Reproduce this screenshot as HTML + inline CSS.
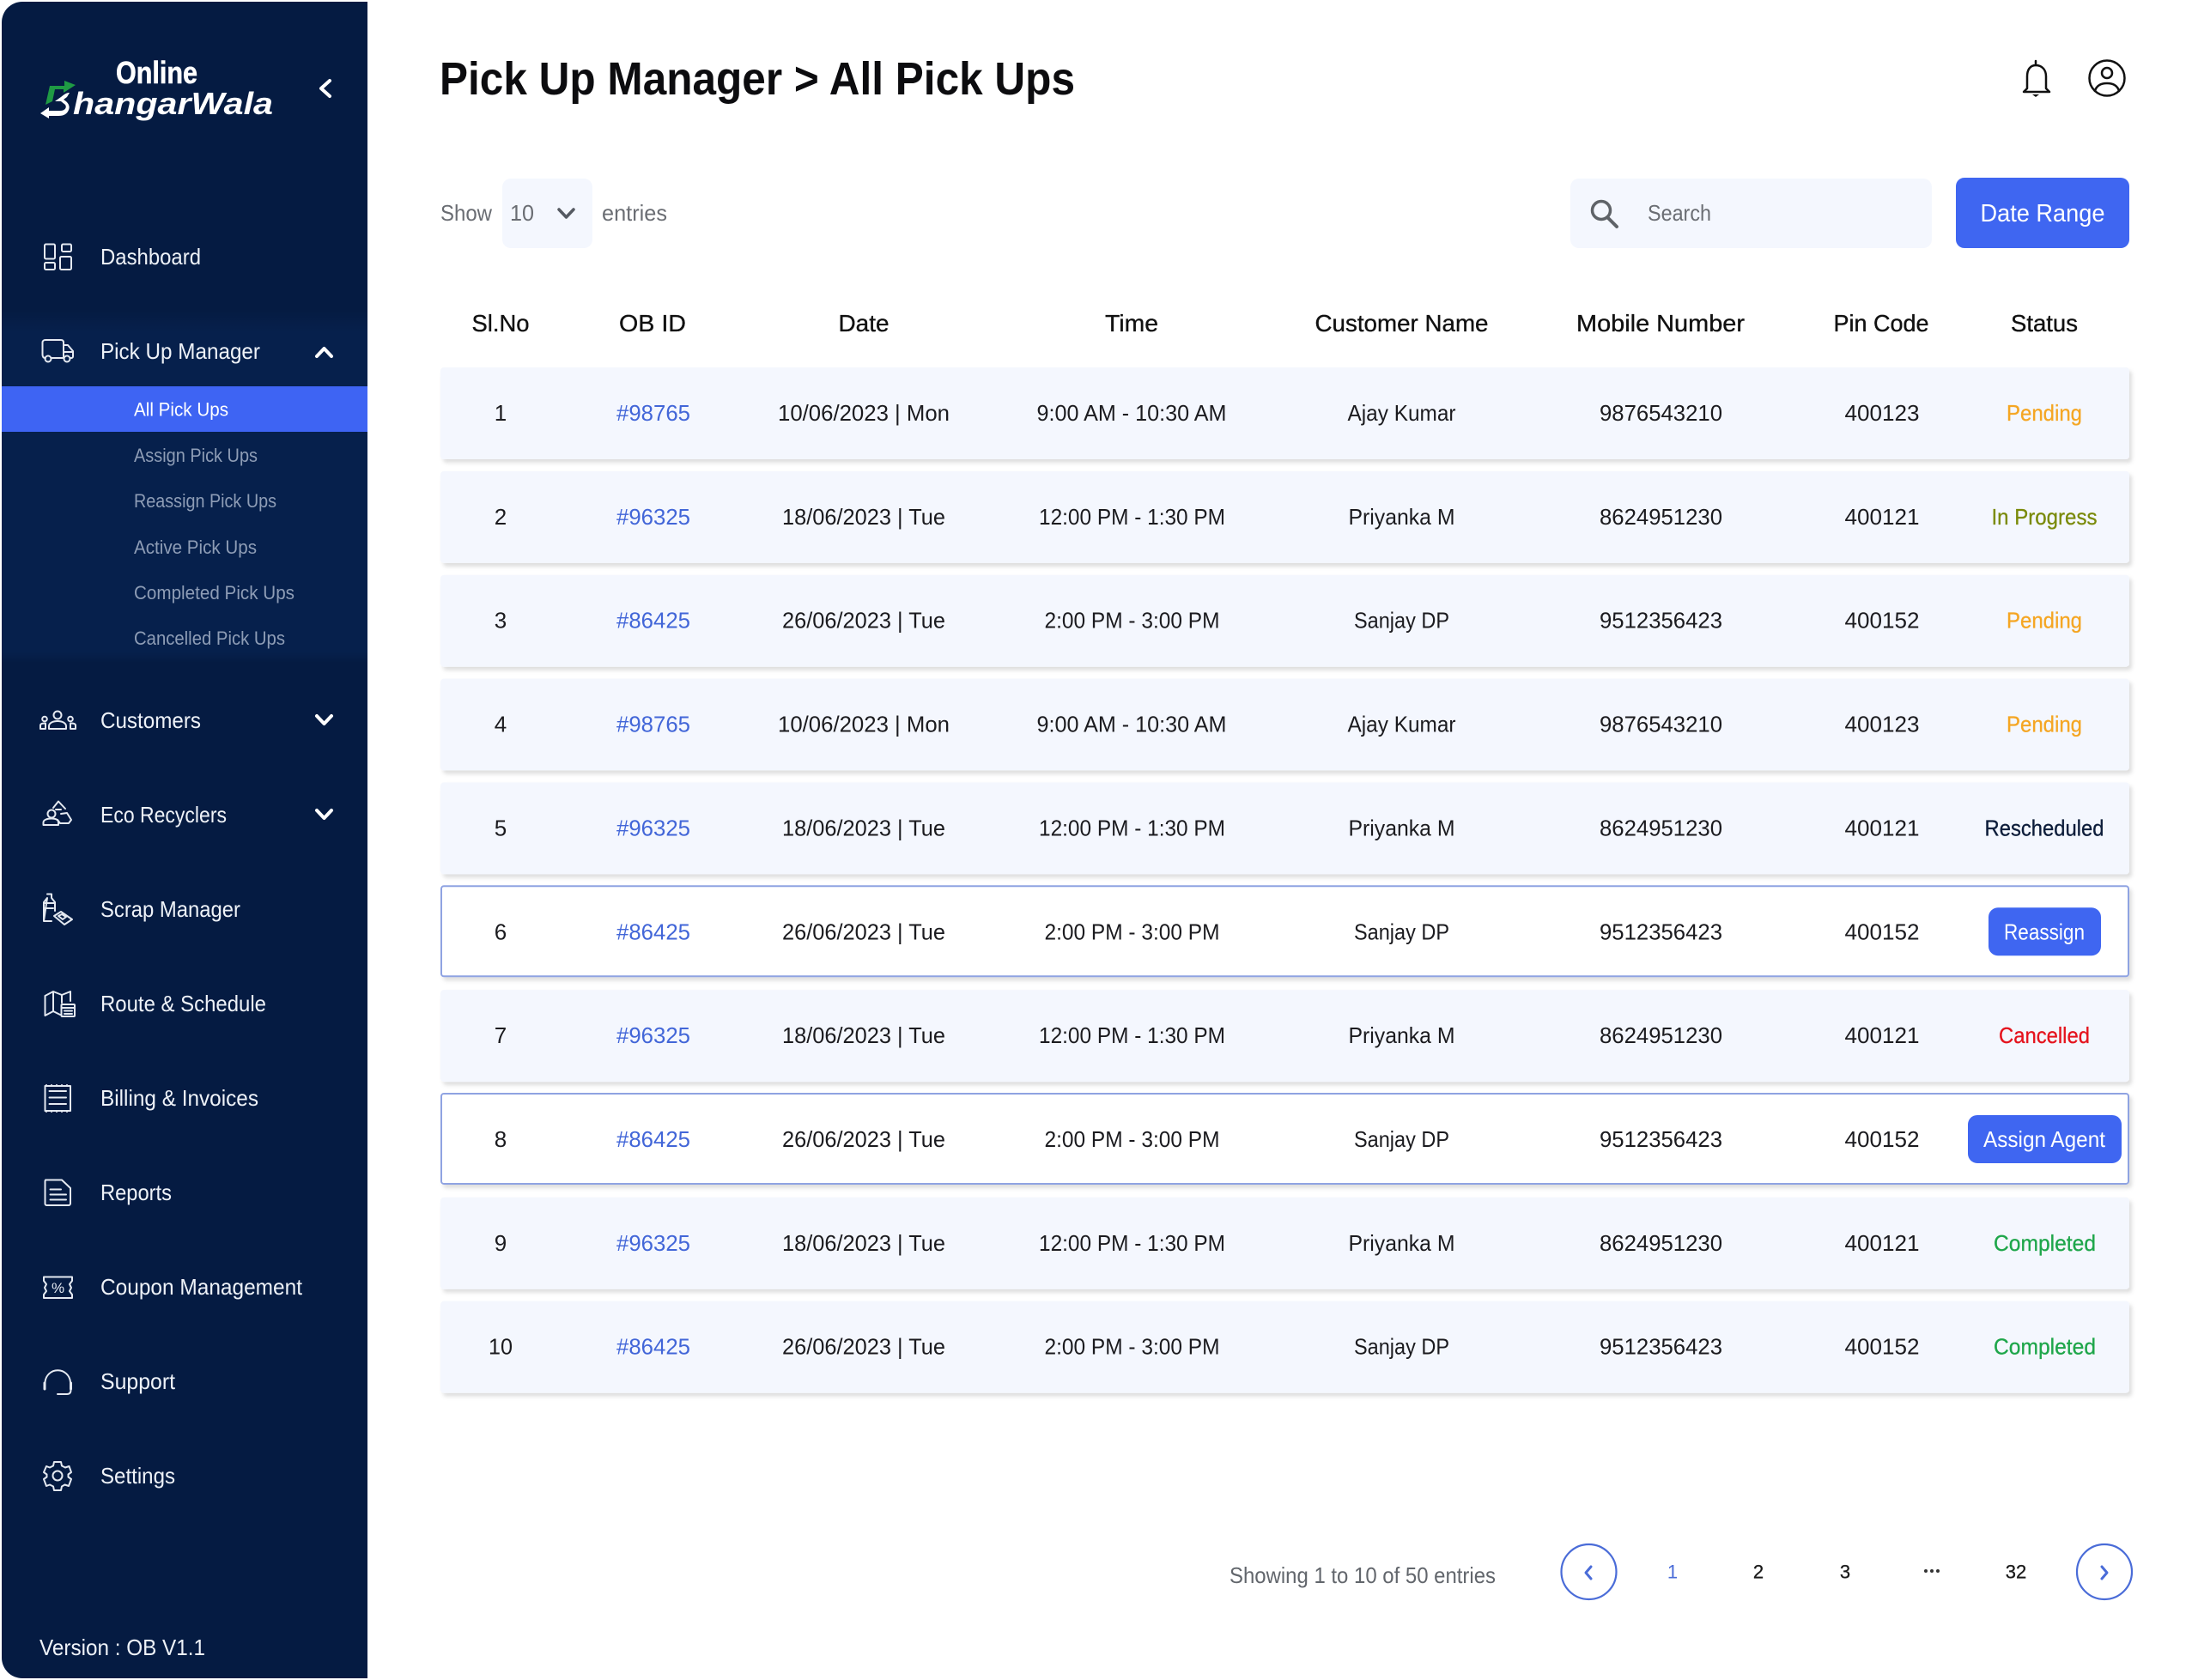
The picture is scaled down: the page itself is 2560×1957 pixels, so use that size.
<!DOCTYPE html>
<html lang="en"><head><meta charset="utf-8"><title>Pick Up Manager</title>
<style>
html,body{margin:0;padding:0;background:#fff;width:2560px;height:1957px;overflow:hidden}
svg{display:block;font-family:"Liberation Sans",Arial,sans-serif}
.ic{fill:none;stroke:#e4e9f1;stroke-width:2;stroke-linejoin:round;stroke-linecap:round}
.chev{fill:none;stroke:#fff;stroke-width:4;stroke-linecap:round;stroke-linejoin:round}
.nav text{font-size:26px;fill:#eef2f8}
.sub text{font-size:22px;fill:#8e9db6}
.hd text{font-size:28px;fill:#111;text-anchor:middle;stroke:#111;stroke-width:.35}
.row text{font-size:26px;fill:#1b1b1f;text-anchor:middle}
.row text.id{fill:#4266d8}
.row text.p{fill:#f5a623;stroke:#f5a623;stroke-width:.3}
.row text.g{fill:#7a8a0a;stroke:#7a8a0a;stroke-width:.3}
.row text.d{fill:#0d1d3a;stroke:#0d1d3a;stroke-width:.3}
.row text.r{fill:#e5131d;stroke:#e5131d;stroke-width:.3}
.row text.c{fill:#1ea64a;stroke:#1ea64a;stroke-width:.3}
.row text.b{fill:#fff}
.f{fill:#f4f7fe}
.o{fill:#fff;stroke:#8fa3e2;stroke-width:2}
</style></head><body>
<svg width="2560" height="1957" viewBox="0 0 2560 1957" xmlns="http://www.w3.org/2000/svg">
<defs>
<filter id="s" x="-2%" y="-20%" width="104%" height="140%"><feDropShadow dx="3" dy="4" stdDeviation="2.5" flood-color="#000" flood-opacity=".13"/></filter>
<linearGradient id="sg" x1="0" y1="0" x2="0" y2="1"><stop offset="0" stop-color="#051b42"/><stop offset=".06" stop-color="#06204c"/><stop offset=".97" stop-color="#06204c"/><stop offset="1" stop-color="#051b42"/></linearGradient>
</defs>
<rect width="2560" height="1957" fill="#fff"/>

<!-- sidebar -->
<path d="M26 2H428V1955H26A24 24 0 0 1 2 1931V26A24 24 0 0 1 26 2Z" fill="#051b42"/>
<rect x="2" y="362" width="426" height="410" fill="url(#sg)"/>
<rect x="2" y="450" width="426" height="53" fill="#3e64f3"/>

<!-- logo -->
<text x="135" y="97" font-size="36" font-weight="700" fill="#fff" stroke="#fff" stroke-width=".6" textLength="95" lengthAdjust="spacingAndGlyphs">Online</text>
<text x="85" y="133" font-size="36" font-weight="700" font-style="italic" fill="#fff" textLength="233" lengthAdjust="spacingAndGlyphs">hangarWala</text>
<path d="M53 122L58 100H75V94L88 99L74 108V104H64L61 118Z" fill="#1f9a44"/>
<path d="M47 132L57 125V129H70C76 129 78 125 76 122L71 118H64L71 113C76 109 78 108 81 108L78 113L74 116C79 119 82 123 80 128C78 133 74 135 68 135H57V138Z" fill="#fff"/>
<path class="chev" d="M384 94L374 103L384 112"/>

<!-- nav -->
<g class="nav">
<text x="117" y="308" textLength="117" lengthAdjust="spacingAndGlyphs">Dashboard</text>
<text x="117" y="418" textLength="186" lengthAdjust="spacingAndGlyphs">Pick Up Manager</text>
<text x="117" y="848" textLength="117" lengthAdjust="spacingAndGlyphs">Customers</text>
<text x="117" y="958" textLength="147" lengthAdjust="spacingAndGlyphs">Eco Recyclers</text>
<text x="117" y="1068" textLength="163" lengthAdjust="spacingAndGlyphs">Scrap Manager</text>
<text x="117" y="1178" textLength="193" lengthAdjust="spacingAndGlyphs">Route &amp; Schedule</text>
<text x="117" y="1288" textLength="184" lengthAdjust="spacingAndGlyphs">Billing &amp; Invoices</text>
<text x="117" y="1398" textLength="83" lengthAdjust="spacingAndGlyphs">Reports</text>
<text x="117" y="1508" textLength="235" lengthAdjust="spacingAndGlyphs">Coupon Management</text>
<text x="117" y="1618" textLength="87" lengthAdjust="spacingAndGlyphs">Support</text>
<text x="117" y="1728" textLength="87" lengthAdjust="spacingAndGlyphs">Settings</text>
<text x="46" y="1928" textLength="193" lengthAdjust="spacingAndGlyphs">Version : OB V1.1</text>
</g>
<g class="sub">
<text x="156" y="484.500" textLength="110" lengthAdjust="spacingAndGlyphs" style="fill:#fff">All Pick Ups</text>
<text x="156" y="538" textLength="144" lengthAdjust="spacingAndGlyphs">Assign Pick Ups</text>
<text x="156" y="591" textLength="166" lengthAdjust="spacingAndGlyphs">Reassign Pick Ups</text>
<text x="156" y="645" textLength="143" lengthAdjust="spacingAndGlyphs">Active Pick Ups</text>
<text x="156" y="698" textLength="187" lengthAdjust="spacingAndGlyphs">Completed Pick Ups</text>
<text x="156" y="751" textLength="176" lengthAdjust="spacingAndGlyphs">Cancelled Pick Ups</text>
</g>
<path class="chev" d="M369 415L377.500 406L386 415"/>
<path class="chev" d="M369 834L377.500 843L386 834"/>
<path class="chev" d="M369 944L377.500 953L386 944"/>

<!-- icons -->
<g class="ic">
<rect x="52" y="284.500" width="12" height="17" rx="1.500"/><rect x="72" y="284.500" width="11" height="8.500" rx="1.500"/><rect x="52" y="306" width="12" height="8" rx="1.500"/><rect x="70" y="299" width="13" height="15" rx="1.500"/>
<path d="M53 417C50 417 49.500 415 49.500 413V399C49.500 397 51 396 53 396H71C73 396 74 397 74 399V417M60 417H73M74 402H79L85 409V415C85 416 84.500 417 83.500 417H82.500"/><circle cx="56" cy="418" r="3.500"/><circle cx="78" cy="418" r="3.500"/><path d="M74 410H85" />
<circle cx="67" cy="833" r="4.500"/><path d="M57 849V846C57 842 62 840 67 840C72 840 77 842 77 846V849Z"/><circle cx="52" cy="837.500" r="2.800"/><path d="M47 849V845C47 843 49 842.500 53 842.500V849Z"/><circle cx="82" cy="837.500" r="2.800"/><path d="M82 842.500C86 842.500 88 843 88 845V849H82Z"/>
<circle cx="60" cy="948" r="4.500"/><path d="M50.500 961V958C50.500 955 55 953.500 60 953.500C65 953.500 68 955 68 958V961Z"/><path d="M62 941L68 933.500L76 942M65 943H71"/><path d="M71 948L78 947L83 955L80 959H70L67 955"/>
<path d="M55 1041.500H60V1046L64 1051V1061M51 1052H64M51 1058H62M51 1073V1051L55 1046ZM51 1073H60"/><path d="M63 1067L71 1062L84 1071L75 1077Z"/><path d="M68 1067L72 1065L77 1068L73 1071Z"/>
<path d="M52.500 1160L62 1155L72 1159L82 1155V1166M72 1159V1168M62 1155V1178M52.500 1160V1183L62 1178L70 1182"/><rect x="71.500" y="1170" width="15.500" height="14" rx="1"/><path d="M71.500 1174H87M75 1177.500H84M75 1181H84"/>
<rect x="52.500" y="1265" width="29.500" height="29" /><path d="M57.500 1271H77M57.500 1278.500H77M57.500 1286H77"/>
<path d="M53 1374.500H72L82 1384V1402C82 1403 81 1404 80 1404H54C53 1404 52.500 1403 52.500 1402V1376C52.500 1375 53 1374.500 54 1374.500ZM58.500 1385.500H71M58.500 1391.500H77M58.500 1397.500H77"/>
<path d="M51 1487.500H84V1492L81 1496L83 1500L81 1504L84 1508V1512H51V1508L54 1504L52 1500L54 1496L51 1492Z"/>
<path d="M52.500 1612V1610A14.800 15 0 0 1 82 1610V1612"/><path d="M52 1611V1618M82.500 1611V1618" stroke-width="3"/><path d="M82.500 1619C82.500 1622.500 81 1624 78 1624H67"/>
<circle cx="67" cy="1719" r="5.500"/>
<path d="M63 1703H71L72 1707.500L76 1709.500L80.500 1708L83 1715L79.500 1717.500V1720.500L83 1723L80 1731L75.500 1729.500L72 1731.500L71 1736H63L62 1731.500L58 1729.500L54 1731L51 1723L54.500 1720.500V1717.500L51 1715L54 1708L58 1709.500L62 1707.500Z"/>
</g>
<g fill="#e4e9f1">
<text x="67.500" y="1506" font-size="17" text-anchor="middle">%</text>
<circle cx="54" cy="1264" r="1"/><circle cx="60" cy="1264" r="1"/><circle cx="66" cy="1264" r="1"/><circle cx="72" cy="1264" r="1"/><circle cx="78" cy="1264" r="1"/>
<circle cx="54" cy="1295" r="1"/><circle cx="60" cy="1295" r="1"/><circle cx="66" cy="1295" r="1"/><circle cx="72" cy="1295" r="1"/><circle cx="78" cy="1295" r="1"/>
</g>

<!-- header -->
<text x="512" y="110" font-size="54" font-weight="700" fill="#0c0c0f" textLength="740" lengthAdjust="spacingAndGlyphs">Pick Up Manager &gt; All Pick Ups</text>
<g fill="none" stroke="#111" stroke-width="2.500" stroke-linecap="round" stroke-linejoin="round">
<path d="M2371 76C2364 76 2361 82 2361 89V103L2357 107H2387L2383 103V89C2383 82 2379 76 2371 76Z"/><path d="M2371 71V76"/>
<circle cx="2454" cy="91" r="20.500"/><circle cx="2454" cy="85" r="6"/><path d="M2440 106C2442 99 2448 97 2454 97C2460 97 2466 99 2468 106"/>
</g>
<path d="M2367 110H2375L2371 113Z" fill="#111"/>

<!-- controls -->
<g font-size="26" fill="#6a6d73">
<text x="513" y="257" textLength="60" lengthAdjust="spacingAndGlyphs">Show</text>
<rect x="585" y="208" width="105" height="81" rx="10" fill="#f4f7fe"/>
<text x="594" y="257" textLength="28" lengthAdjust="spacingAndGlyphs">10</text>
<text x="701" y="257" textLength="76" lengthAdjust="spacingAndGlyphs">entries</text>
<rect x="1829" y="208" width="421" height="81" rx="10" fill="#f4f7fe"/>
<text x="1919" y="257" textLength="74" lengthAdjust="spacingAndGlyphs">Search</text>
</g>
<path d="M651 244L659.500 253L668 244" fill="none" stroke="#555a62" stroke-width="3.500" stroke-linecap="round" stroke-linejoin="round"/>
<circle cx="1865" cy="245" r="10.500" fill="none" stroke="#5f6368" stroke-width="3.500"/><path d="M1872 253L1883 264" stroke="#5f6368" stroke-width="4" stroke-linecap="round"/>
<rect x="2278" y="207" width="202" height="82" rx="10" fill="#3f66f1"/>
<text x="2379" y="258" font-size="29" fill="#fff" text-anchor="middle" textLength="145" lengthAdjust="spacingAndGlyphs">Date Range</text>

<!-- table header -->
<g class="hd" transform="translate(0 386)">
<text x="583" textLength="67" lengthAdjust="spacingAndGlyphs">Sl.No</text>
<text x="760" textLength="78" lengthAdjust="spacingAndGlyphs">OB ID</text>
<text x="1006" textLength="59" lengthAdjust="spacingAndGlyphs">Date</text>
<text x="1318" textLength="62" lengthAdjust="spacingAndGlyphs">Time</text>
<text x="1632.500" textLength="202" lengthAdjust="spacingAndGlyphs">Customer Name</text>
<text x="1934" textLength="196" lengthAdjust="spacingAndGlyphs">Mobile Number</text>
<text x="2191" textLength="111" lengthAdjust="spacingAndGlyphs">Pin Code</text>
<text x="2381" textLength="78" lengthAdjust="spacingAndGlyphs">Status</text>
</g>

<!-- rows -->
<g class="row" transform="translate(0 428)"><rect class="f" x="513" y="0" width="1967" height="107" rx="4" filter="url(#s)"/><g transform="translate(0 62)">
<text x="583">1</text><text class="id" x="761" textLength="86" lengthAdjust="spacingAndGlyphs">#98765</text><text x="1006" textLength="200" lengthAdjust="spacingAndGlyphs">10/06/2023 | Mon</text><text x="1318" textLength="221" lengthAdjust="spacingAndGlyphs">9:00 AM - 10:30 AM</text><text x="1632.500" textLength="126" lengthAdjust="spacingAndGlyphs">Ajay Kumar</text><text x="1934.500" textLength="143" lengthAdjust="spacingAndGlyphs">9876543210</text><text x="2192" textLength="87" lengthAdjust="spacingAndGlyphs">400123</text><text class="p" x="2381" textLength="88" lengthAdjust="spacingAndGlyphs">Pending</text></g></g>

<g class="row" transform="translate(0 548.850)"><rect class="f" x="513" y="0" width="1967" height="107" rx="4" filter="url(#s)"/><g transform="translate(0 62)">
<text x="583">2</text><text class="id" x="761" textLength="86" lengthAdjust="spacingAndGlyphs">#96325</text><text x="1006" textLength="190" lengthAdjust="spacingAndGlyphs">18/06/2023 | Tue</text><text x="1318.500" textLength="217" lengthAdjust="spacingAndGlyphs">12:00 PM - 1:30 PM</text><text x="1632.500" textLength="124" lengthAdjust="spacingAndGlyphs">Priyanka M</text><text x="1934.500" textLength="143" lengthAdjust="spacingAndGlyphs">8624951230</text><text x="2192" textLength="87" lengthAdjust="spacingAndGlyphs">400121</text><text class="g" x="2381" textLength="123" lengthAdjust="spacingAndGlyphs">In Progress</text></g></g>

<g class="row" transform="translate(0 669.700)"><rect class="f" x="513" y="0" width="1967" height="107" rx="4" filter="url(#s)"/><g transform="translate(0 62)">
<text x="583">3</text><text class="id" x="761" textLength="86" lengthAdjust="spacingAndGlyphs">#86425</text><text x="1006" textLength="190" lengthAdjust="spacingAndGlyphs">26/06/2023 | Tue</text><text x="1318.500" textLength="204" lengthAdjust="spacingAndGlyphs">2:00 PM - 3:00 PM</text><text x="1632.500" textLength="111" lengthAdjust="spacingAndGlyphs">Sanjay DP</text><text x="1934.500" textLength="143" lengthAdjust="spacingAndGlyphs">9512356423</text><text x="2192" textLength="87" lengthAdjust="spacingAndGlyphs">400152</text><text class="p" x="2381" textLength="88" lengthAdjust="spacingAndGlyphs">Pending</text></g></g>

<g class="row" transform="translate(0 790.550)"><rect class="f" x="513" y="0" width="1967" height="107" rx="4" filter="url(#s)"/><g transform="translate(0 62)">
<text x="583">4</text><text class="id" x="761" textLength="86" lengthAdjust="spacingAndGlyphs">#98765</text><text x="1006" textLength="200" lengthAdjust="spacingAndGlyphs">10/06/2023 | Mon</text><text x="1318" textLength="221" lengthAdjust="spacingAndGlyphs">9:00 AM - 10:30 AM</text><text x="1632.500" textLength="126" lengthAdjust="spacingAndGlyphs">Ajay Kumar</text><text x="1934.500" textLength="143" lengthAdjust="spacingAndGlyphs">9876543210</text><text x="2192" textLength="87" lengthAdjust="spacingAndGlyphs">400123</text><text class="p" x="2381" textLength="88" lengthAdjust="spacingAndGlyphs">Pending</text></g></g>

<g class="row" transform="translate(0 911.400)"><rect class="f" x="513" y="0" width="1967" height="107" rx="4" filter="url(#s)"/><g transform="translate(0 62)">
<text x="583">5</text><text class="id" x="761" textLength="86" lengthAdjust="spacingAndGlyphs">#96325</text><text x="1006" textLength="190" lengthAdjust="spacingAndGlyphs">18/06/2023 | Tue</text><text x="1318.500" textLength="217" lengthAdjust="spacingAndGlyphs">12:00 PM - 1:30 PM</text><text x="1632.500" textLength="124" lengthAdjust="spacingAndGlyphs">Priyanka M</text><text x="1934.500" textLength="143" lengthAdjust="spacingAndGlyphs">8624951230</text><text x="2192" textLength="87" lengthAdjust="spacingAndGlyphs">400121</text><text class="d" x="2381" textLength="139" lengthAdjust="spacingAndGlyphs">Rescheduled</text></g></g>

<g class="row" transform="translate(0 1032.250)"><rect class="o" x="514" y="0" width="1965" height="105" rx="3" filter="url(#s)"/><g transform="translate(0 62)">
<text x="583">6</text><text class="id" x="761" textLength="86" lengthAdjust="spacingAndGlyphs">#86425</text><text x="1006" textLength="190" lengthAdjust="spacingAndGlyphs">26/06/2023 | Tue</text><text x="1318.500" textLength="204" lengthAdjust="spacingAndGlyphs">2:00 PM - 3:00 PM</text><text x="1632.500" textLength="111" lengthAdjust="spacingAndGlyphs">Sanjay DP</text><text x="1934.500" textLength="143" lengthAdjust="spacingAndGlyphs">9512356423</text><text x="2192" textLength="87" lengthAdjust="spacingAndGlyphs">400152</text></g>
<rect x="2316" y="25" width="131" height="56" rx="11" fill="#3f66f1"/><text class="b" x="2381" y="62" textLength="94" lengthAdjust="spacingAndGlyphs">Reassign</text></g>

<g class="row" transform="translate(0 1153.100)"><rect class="f" x="513" y="0" width="1967" height="107" rx="4" filter="url(#s)"/><g transform="translate(0 62)">
<text x="583">7</text><text class="id" x="761" textLength="86" lengthAdjust="spacingAndGlyphs">#96325</text><text x="1006" textLength="190" lengthAdjust="spacingAndGlyphs">18/06/2023 | Tue</text><text x="1318.500" textLength="217" lengthAdjust="spacingAndGlyphs">12:00 PM - 1:30 PM</text><text x="1632.500" textLength="124" lengthAdjust="spacingAndGlyphs">Priyanka M</text><text x="1934.500" textLength="143" lengthAdjust="spacingAndGlyphs">8624951230</text><text x="2192" textLength="87" lengthAdjust="spacingAndGlyphs">400121</text><text class="r" x="2381" textLength="106" lengthAdjust="spacingAndGlyphs">Cancelled</text></g></g>

<g class="row" transform="translate(0 1273.950)"><rect class="o" x="514" y="0" width="1965" height="105" rx="3" filter="url(#s)"/><g transform="translate(0 62)">
<text x="583">8</text><text class="id" x="761" textLength="86" lengthAdjust="spacingAndGlyphs">#86425</text><text x="1006" textLength="190" lengthAdjust="spacingAndGlyphs">26/06/2023 | Tue</text><text x="1318.500" textLength="204" lengthAdjust="spacingAndGlyphs">2:00 PM - 3:00 PM</text><text x="1632.500" textLength="111" lengthAdjust="spacingAndGlyphs">Sanjay DP</text><text x="1934.500" textLength="143" lengthAdjust="spacingAndGlyphs">9512356423</text><text x="2192" textLength="87" lengthAdjust="spacingAndGlyphs">400152</text></g>
<rect x="2292" y="25" width="179" height="56" rx="11" fill="#3f66f1"/><text class="b" x="2381" y="62" textLength="142" lengthAdjust="spacingAndGlyphs">Assign Agent</text></g>

<g class="row" transform="translate(0 1394.800)"><rect class="f" x="513" y="0" width="1967" height="107" rx="4" filter="url(#s)"/><g transform="translate(0 62)">
<text x="583">9</text><text class="id" x="761" textLength="86" lengthAdjust="spacingAndGlyphs">#96325</text><text x="1006" textLength="190" lengthAdjust="spacingAndGlyphs">18/06/2023 | Tue</text><text x="1318.500" textLength="217" lengthAdjust="spacingAndGlyphs">12:00 PM - 1:30 PM</text><text x="1632.500" textLength="124" lengthAdjust="spacingAndGlyphs">Priyanka M</text><text x="1934.500" textLength="143" lengthAdjust="spacingAndGlyphs">8624951230</text><text x="2192" textLength="87" lengthAdjust="spacingAndGlyphs">400121</text><text class="c" x="2381.500" textLength="119" lengthAdjust="spacingAndGlyphs">Completed</text></g></g>

<g class="row" transform="translate(0 1515.650)"><rect class="f" x="513" y="0" width="1967" height="107" rx="4" filter="url(#s)"/><g transform="translate(0 62)">
<text x="583" textLength="28" lengthAdjust="spacingAndGlyphs">10</text><text class="id" x="761" textLength="86" lengthAdjust="spacingAndGlyphs">#86425</text><text x="1006" textLength="190" lengthAdjust="spacingAndGlyphs">26/06/2023 | Tue</text><text x="1318.500" textLength="204" lengthAdjust="spacingAndGlyphs">2:00 PM - 3:00 PM</text><text x="1632.500" textLength="111" lengthAdjust="spacingAndGlyphs">Sanjay DP</text><text x="1934.500" textLength="143" lengthAdjust="spacingAndGlyphs">9512356423</text><text x="2192" textLength="87" lengthAdjust="spacingAndGlyphs">400152</text><text class="c" x="2381.500" textLength="119" lengthAdjust="spacingAndGlyphs">Completed</text></g></g>

<!-- pagination -->
<text x="1432" y="1844" font-size="26" fill="#62666c" textLength="310" lengthAdjust="spacingAndGlyphs">Showing 1 to 10 of 50 entries</text>
<circle cx="1850.500" cy="1831" r="32" fill="#fff" stroke="#4a6cd8" stroke-width="2.200"/>
<circle cx="2451" cy="1831" r="32" fill="#fff" stroke="#4a6cd8" stroke-width="2.200"/>
<path d="M1853 1825L1847 1832L1853 1839" fill="none" stroke="#4a6cd8" stroke-width="3" stroke-linecap="round" stroke-linejoin="round"/>
<path d="M2448 1825L2454 1832L2448 1839" fill="none" stroke="#4a6cd8" stroke-width="3" stroke-linecap="round" stroke-linejoin="round"/>
<g font-size="22" text-anchor="middle" fill="#1a1a1a" stroke="#1a1a1a" stroke-width=".3">
<text x="1948" y="1838.500" fill="#4a6cd8" stroke="none">1</text><text x="2048" y="1838.500">2</text><text x="2149" y="1838.500">3</text><text x="2348" y="1838.500">32</text>
</g>
<g fill="#333"><circle cx="2243" cy="1830" r="2"/><circle cx="2250" cy="1830" r="2"/><circle cx="2257" cy="1830" r="2"/></g>
</svg>
</body></html>
